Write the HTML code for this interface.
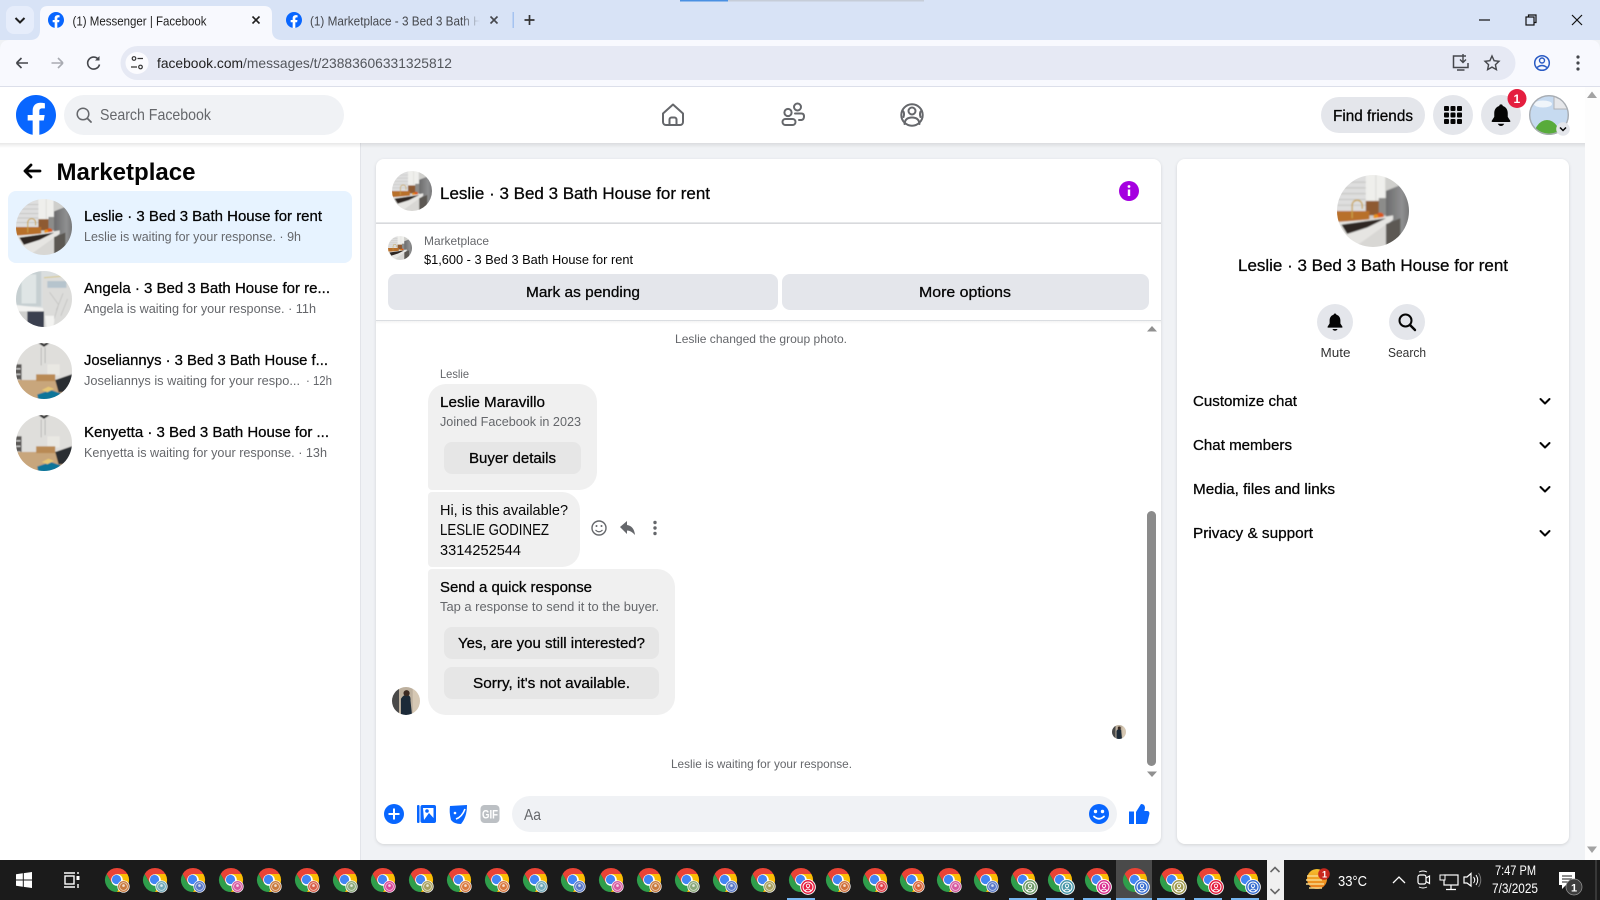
<!DOCTYPE html>
<html lang="en"><head><meta charset="utf-8"><title>Messenger | Facebook</title>
<style>
html,body{margin:0;padding:0;width:1600px;height:900px;overflow:hidden;background:#f0f2f5}
svg{display:block}
text{font-family:"Liberation Sans",sans-serif;fill:#050505;font-size:15px}
.m{stroke:#050505;stroke-width:.28px}
.s{fill:#65676b;font-size:13px}
.x{fill:#65676b;font-size:12px}
.t{font-size:13px;fill:#1f1f1f}
.w{fill:#fff;font-size:13px}
.b{font-weight:700}
</style></head><body>
<svg xmlns="http://www.w3.org/2000/svg" width="1600" height="900" viewBox="0 0 1600 900">
<defs>
<clipPath id="cc"><circle cx="50" cy="50" r="50"/></clipPath>
<clipPath id="tab2"><rect x="305" y="8" width="175" height="26"/></clipPath>
<filter id="soft" x="-5%" y="-5%" width="110%" height="110%"><feGaussianBlur stdDeviation="1"/></filter>
<linearGradient id="fade" x1="0" x2="1"><stop offset="0" stop-color="#d8e3f6" stop-opacity="0"/><stop offset="1" stop-color="#d8e3f6"/></linearGradient>
<linearGradient id="shd" x1="0" x2="0" y1="0" y2="1"><stop offset="0" stop-color="#000" stop-opacity=".09"/><stop offset="1" stop-color="#000" stop-opacity="0"/></linearGradient>
<linearGradient id="sun" x1="0" x2="0" y1="0" y2="1"><stop offset="0" stop-color="#f6c02c"/><stop offset="1" stop-color="#ea7a1c"/></linearGradient>
<linearGradient id="steel" x1="0" x2="1"><stop offset="0" stop-color="#6c6c6d"/><stop offset=".6" stop-color="#8f9091"/><stop offset="1" stop-color="#6a6a6b"/></linearGradient>
<symbol id="fb" viewBox="0 0 36 36"><path fill="#0866ff" d="M15 35.8C6.5 34.3 0 26.9 0 18 0 8.1 8.1 0 18 0s18 8.1 18 18c0 8.9-6.5 16.3-15 17.8l-1-.8h-4l-1 .8z"/><path fill="#fff" d="m25 23 .8-5H21v-3.5c0-1.4.5-2.5 2.7-2.5H26V7.4c-1.3-.2-2.7-.4-4-.4-4.1 0-7 2.5-7 7v4h-4.5v5H15v12.7c1 .2 2 .3 3 .3s2-.1 3-.3V23h4z"/></symbol>
<symbol id="kit" viewBox="0 0 100 100"><g clip-path="url(#cc)"><g filter="url(#soft)">
<rect x="-5" y="-5" width="110" height="110" fill="#cfcfcc"/>
<rect x="-5" y="-5" width="47" height="60" fill="#dedede"/>
<path d="M0 10H42M0 18H42M0 26H42M0 34H42M0 42H42" stroke="#c4c4c2" stroke-width="1.500"/>
<rect x="40" y="-5" width="27" height="42" fill="#efefec"/><path d="M54 0V36" stroke="#cfcfcc"/>
<rect x="40" y="36" width="20" height="20" fill="#8e5a30"/>
<rect x="58" y="32" width="14" height="24" fill="#8c8c8a"/>
<path d="M68 22 88 14 105 20V90H68Z" fill="url(#steel)"/>
<rect x="-5" y="50" width="50" height="15" fill="#b8702c"/>
<path d="M21 60V42a7 7 0 0 1 14 0v5" fill="none" stroke="#c9a24a" stroke-width="1.800"/>
<circle cx="60" cy="57" r="5" fill="#d9591a"/><circle cx="54" cy="58" r="3.500" fill="#e8921e"/>
<path d="M-5 66 42 62 78 56 78 62 30 100H-5Z" fill="#e6e5e2"/>
<path d="M6 69 40 64 68 60 42 73 14 82Z" fill="#2d2723"/>
<path d="M18 105 72 66 76 105Z" fill="#d8d7d4"/>
<path d="M68 68 88 60V105H68Z" fill="#5c5852"/>
</g></g></symbol>
<symbol id="bath" viewBox="0 0 100 100"><g clip-path="url(#cc)"><g filter="url(#soft)">
<rect x="-5" y="-5" width="110" height="110" fill="#dadedf"/>
<rect x="-5" y="-5" width="50" height="68" fill="#c6cfd1"/>
<rect x="10" y="6" width="26" height="52" fill="#dfe5e5"/>
<rect x="48" y="12" width="57" height="93" fill="#dcdcda"/>
<rect x="56" y="18" width="34" height="12" fill="#b6c4cd"/>
<path d="M50 12 100 8" stroke="#d8c98e" stroke-width="2"/>
<path d="M60 38 76 60 68 86 M84 40 72 70 M92 50 80 80" stroke="#bdbdbb" stroke-width="1.200" fill="none"/>
<path d="M-5 60 48 66 50 74-5 72Z" fill="#f3f3f1"/>
<path d="M20 72H50V105H20Z" fill="#3a4050"/>
<path d="M-5 72H20V105H-5Z" fill="#cfcfcd"/>
<path d="M52 80H68Q70 96 63 105H55Z" fill="#f3f3f1"/>
</g></g></symbol>
<symbol id="liv" viewBox="0 0 100 100"><g clip-path="url(#cc)"><g filter="url(#soft)">
<rect x="-5" y="-5" width="110" height="110" fill="#dfdedb"/>
<path d="M32 -5 50 7 68 -5H60L50 2 40 -5Z" fill="#2b2b2b"/>
<path d="M45 8V40M52 8V36" stroke="#888" stroke-width=".8"/>
<rect x="56" y="38" width="22" height="20" fill="#e9e8e3"/>
<rect x="-5" y="38" width="15" height="34" fill="#5a5856"/>
<path d="M0 46h8M0 56h8M0 66h8" stroke="#e0e0e0" stroke-width="2"/>
<rect x="-5" y="66" width="110" height="40" fill="#c8a67c"/>
<rect x="36" y="56" width="34" height="12" fill="#b98a54"/>
<path d="M70 66 105 54V88H76Z" fill="#2c2d30"/>
<path d="M38 92 62 84 80 90 74 105H40Z" fill="#117599"/>
<path d="M46 84 58 78 68 82 56 88Z" fill="#e6c674"/>
</g></g></symbol>
<symbol id="per" viewBox="0 0 100 100"><g clip-path="url(#cc)"><g filter="url(#soft)">
<rect x="-5" y="-5" width="110" height="110" fill="#bdb09e"/>
<rect x="-5" y="-5" width="30" height="110" fill="#4a4a4a"/>
<path d="M32 105V42Q42 26 54 28 68 30 66 48L72 105Z" fill="#1b2a38"/>
<circle cx="52" cy="22" r="11" fill="#3a2a20"/>
<rect x="74" y="-5" width="31" height="110" fill="#d6c8b4"/>
</g></g></symbol>
<g id="c"><path fill="#ea4335" d="M-10.4 -6A12 12 0 0 1 10.4 -6L0 -6-5.2 3Z"/><path fill="#2f9e4b" d="M-10.4 -6A12 12 0 0 0 0 12L5.2 3-5.2 3Z"/><path fill="#fbbc04" d="M10.4 -6A12 12 0 0 1 0 12L5.2 3 0 -6Z"/><circle r="5.8" fill="#fff"/><circle r="4.6" cx="-.5" cy="-.5" fill="#4285f4"/></g>
<g id="i"><use href="#c"/><circle cx="6.5" cy="6.5" r="5.8" fill="currentColor" stroke="#fff" stroke-width=".7"/><circle cx="6.5" cy="6.5" r="3.9" fill="none" stroke="#fff" stroke-opacity=".7" stroke-width=".8"/><circle cx="6.5" cy="5.6" r="1.3" fill="#fff" fill-opacity=".75"/></g>
<g id="I"><use href="#c"/><circle cx="7" cy="7" r="7.4" fill="currentColor" stroke="#fff" stroke-width=".9"/><circle cx="7" cy="7" r="5" fill="none" stroke="#fff" stroke-width="1"/><circle cx="7" cy="5.8" r="1.7" fill="none" stroke="#fff" stroke-width=".9"/><path d="M4.2 10.4Q7 7.6 9.8 10.4" fill="none" stroke="#fff" stroke-width=".9"/></g>
<path id="chev" d="M-4.5 -2 0 2.500 4.500 -2" fill="none" stroke="#050505" stroke-width="2" stroke-linecap="round" stroke-linejoin="round"/>
<path id="bell" d="M0 -8.5a1.4 1.4 0 0 1 1.4 1.3C4 -6.5 5.4 -4.2 5.4 -1.5V1.5L7.4 4.6Q7.8 5.6 6.6 5.6H-6.6Q-7.8 5.6 -7.4 4.6L-5.4 1.5V-1.5C-5.4 -4.2 -4 -6.5 -1.4 -7.2A1.4 1.4 0 0 1 0 -8.5ZM-2.6 7H2.6Q1.6 8.8 0 8.8T-2.6 7Z" fill="#050505"/>
</defs>

<!-- browser chrome -->
<rect width="1600" height="40" fill="#d8e3f6"/>
<rect x="680" width="48" height="1.500" fill="#4a90e2"/><rect x="728" width="196" height="1.500" fill="#c6cdd8"/>
<rect x="6" y="6" width="28" height="28" rx="8" fill="#e6edfb"/>
<path d="M15.500 18 20 22.500 24.500 18" fill="none" stroke="#1f1f1f" stroke-width="2"/>
<path d="M30 40Q40 40 40 30V14Q40 6 48 6H264Q272 6 272 14V30Q272 40 282 40Z" fill="#f8f9fe"/>
<use href="#fb" x="48" y="12" width="16" height="16"/>
<text x="72.500" y="25.500" class="t" textLength="134" lengthAdjust="spacingAndGlyphs">(1) Messenger | Facebook</text>
<path d="M252.500 16.500 259.500 23.500M259.500 16.500 252.500 23.500" stroke="#1f1f1f" stroke-width="1.600"/>
<use href="#fb" x="286" y="12" width="16" height="16"/>
<g clip-path="url(#tab2)"><text x="310" y="25.500" class="t" textLength="197" lengthAdjust="spacingAndGlyphs" style="fill:#45474c">(1) Marketplace - 3 Bed 3 Bath House</text></g>
<rect x="462" y="10" width="18" height="20" fill="url(#fade)"/>
<path d="M490.500 16.500 497.500 23.500M497.500 16.500 490.500 23.500" stroke="#45474c" stroke-width="1.600"/>
<rect x="512.500" y="12" width="1.500" height="16" fill="#a5c3f0"/>
<path d="M529.500 15V25M524.500 20H534.500" stroke="#333" stroke-width="1.700"/>
<path d="M1479 20H1490" stroke="#111" stroke-width="1.200"/>
<rect x="1526" y="17" width="8" height="8" fill="none" stroke="#111" stroke-width="1.200"/><path d="M1528.500 17V15H1536V22.500H1534" fill="none" stroke="#111" stroke-width="1.200"/>
<path d="M1572 15 1582 25M1582 15 1572 25" stroke="#111" stroke-width="1.200"/>

<path d="M0 86V50Q0 40 10 40H1590Q1600 40 1600 50V86Z" fill="#f8f9fe"/>
<path d="M16.500 63H28M16.500 63 21.500 58M16.500 63 21.500 68" fill="none" stroke="#45474c" stroke-width="1.600"/>
<path d="M51.500 63H63M63 63 58 58M63 63 58 68" fill="none" stroke="#a9abb2" stroke-width="1.600"/>
<path d="M98.500 59.500A6 6 0 1 0 99.500 64.500" fill="none" stroke="#45474c" stroke-width="1.600"/><path d="M99.500 56V60.500H95Z" fill="#45474c"/>
<rect x="120.500" y="46" width="1395" height="34" rx="17" fill="#e6e9f4"/>
<ellipse cx="137" cy="63" rx="11.500" ry="11" fill="#fbfbfe"/>
<circle cx="134" cy="58.500" r="1.800" fill="none" stroke="#333" stroke-width="1.200"/><path d="M137.500 58.500H143M131 67H137" stroke="#333" stroke-width="1.300"/><circle cx="140.500" cy="67" r="1.800" fill="none" stroke="#333" stroke-width="1.200"/>
<text x="157" y="68" style="font-size:14px;fill:#1f1f1f" textLength="295" lengthAdjust="spacingAndGlyphs">facebook.com<tspan style="fill:#53565c">/messages/t/23883606331325812</tspan></text>
<path d="M1466 56H1453.500V67.500H1468V63M1457 70H1464.500" fill="none" stroke="#45474c" stroke-width="1.500"/><path d="M1463 54V62M1460 59.500 1463 62.500 1466 59.500" fill="none" stroke="#45474c" stroke-width="1.400"/>
<path d="M1492 56 1494.100 60.700 1499 61.300 1495.400 64.700 1496.400 69.600 1492 67.100 1487.600 69.600 1488.600 64.700 1485 61.300 1489.900 60.700Z" fill="none" stroke="#45474c" stroke-width="1.400"/>
<circle cx="1542" cy="63" r="7.300" fill="none" stroke="#2a5bc4" stroke-width="1.500"/><circle cx="1542" cy="60.500" r="2.500" fill="none" stroke="#2a5bc4" stroke-width="1.400"/><path d="M1537 67.500Q1542 63.500 1547 67.500" fill="none" stroke="#2a5bc4" stroke-width="1.400"/>
<circle cx="1578" cy="57" r="1.600" fill="#45474c"/><circle cx="1578" cy="63" r="1.600" fill="#45474c"/><circle cx="1578" cy="69" r="1.600" fill="#45474c"/>
<rect y="86" width="1600" height="1" fill="#dcdfea"/>

<!-- page background -->
<rect y="87" width="1600" height="773" fill="#f0f2f5"/>
<rect x="1585" y="87" width="15" height="773" fill="#fdfdfd"/>
<rect y="143" width="360" height="717" fill="#fff"/><rect x="360" y="143" width="1" height="717" fill="#e2e4e9"/>
<rect y="143" width="1585" height="5" fill="url(#shd)"/>
<rect y="87" width="1585" height="56" fill="#fff"/>
<path d="M1592 91.500 1597 98H1587Z" fill="#a3a3a3"/>
<path d="M1592 853 1597 846.500H1587Z" fill="#a3a3a3"/>

<!-- fb header -->
<use href="#fb" x="15.500" y="95" width="41" height="40"/>
<rect x="64" y="95" width="280" height="40" rx="20" fill="#f0f2f5"/>
<circle cx="83" cy="114" r="5.800" fill="none" stroke="#65676b" stroke-width="1.500"/><path d="M87.500 118.500 91 122" stroke="#65676b" stroke-width="1.800" stroke-linecap="round"/>
<text x="100" y="120" class="s" style="font-size:16px" textLength="111" lengthAdjust="spacingAndGlyphs">Search Facebook</text>
<g fill="none" stroke="#65676b" stroke-width="2" stroke-linejoin="round" stroke-linecap="round">
<path d="M663 113.500 673 104.500 683 113.500V122A3 3 0 0 1 680 125H666A3 3 0 0 1 663 122Z"/><path d="M669.500 125V119.500A2 2 0 0 1 671.500 117.500H674.500A2 2 0 0 1 676.500 119.500V125"/>
<circle cx="788" cy="112.500" r="3.600"/><rect x="782.500" y="119" width="13" height="6" rx="3"/><circle cx="797.500" cy="107" r="3.500"/><path d="M795 113.500H801.500Q804 113.500 804 116.500T801.500 120H799"/>
<circle cx="912" cy="115" r="10.700"/><circle cx="912" cy="111" r="3.500"/><path d="M904.500 124Q905 117.500 912 117.500T919.500 124"/><path d="M902.500 110.500Q905 113 903.500 117M921.500 110.500Q919 113 920.500 117"/>
</g>
<rect x="1321" y="97" width="104" height="36" rx="18" fill="#e4e6eb"/>
<text x="1333" y="121" class="m" style="font-size:16px" textLength="80" lengthAdjust="spacingAndGlyphs">Find friends</text>
<circle cx="1453" cy="115" r="20" fill="#e4e6eb"/>
<g fill="#050505"><rect x="1444" y="106" width="5" height="5" rx="1"/><rect x="1450.500" y="106" width="5" height="5" rx="1"/><rect x="1457" y="106" width="5" height="5" rx="1"/><rect x="1444" y="112.500" width="5" height="5" rx="1"/><rect x="1450.500" y="112.500" width="5" height="5" rx="1"/><rect x="1457" y="112.500" width="5" height="5" rx="1"/><rect x="1444" y="119" width="5" height="5" rx="1"/><rect x="1450.500" y="119" width="5" height="5" rx="1"/><rect x="1457" y="119" width="5" height="5" rx="1"/></g>
<circle cx="1501" cy="115" r="20" fill="#e4e6eb"/>
<use href="#bell" transform="translate(1501 115) scale(1.250)"/>
<circle cx="1517" cy="98.500" r="9.500" fill="#e41e3f"/><text x="1513.500" y="103" class="b" style="font-size:12px;fill:#fff">1</text>
<clipPath id="pa"><circle cx="1549" cy="115" r="20"/></clipPath>
<g clip-path="url(#pa)"><rect x="1529" y="95" width="40" height="40" fill="#c6daf0"/><ellipse cx="1543" cy="104" rx="9" ry="3.500" fill="#f0f5fa"/><ellipse cx="1547" cy="140" rx="14" ry="20" fill="#58ab3b"/><path d="M1554 95 1569 109V95Z" fill="#f8f8f8"/><path d="M1554 95V109H1569Z" fill="#e6e7ea"/><path d="M1554 95V109H1569" fill="none" stroke="#b0b3b8" stroke-width="1"/><circle cx="1549" cy="115" r="19.500" fill="none" stroke="#a8acb1" stroke-width="1.800"/></g>
<circle cx="1563" cy="129" r="6.800" fill="#e4e6eb"/><path d="M1560 127.500 1563 130.500 1566 127.500" fill="none" stroke="#050505" stroke-width="1.500"/>

<!-- sidebar -->
<path d="M25 171H40M25 171 31 165M25 171 31 177" fill="none" stroke="#050505" stroke-width="2.800" stroke-linecap="round"/>
<text x="56.500" y="180" class="b" style="font-size:24px" textLength="139" lengthAdjust="spacingAndGlyphs">Marketplace</text>
<rect x="8" y="191" width="344" height="72" rx="8" fill="#e7f3ff"/>
<use href="#kit" x="16" y="199" width="56" height="56"/>
<use href="#bath" x="16" y="271" width="56" height="56"/>
<use href="#liv" x="16" y="343" width="56" height="56"/>
<use href="#liv" x="16" y="415" width="56" height="56"/>
<text x="84" y="221" class="m" textLength="238" lengthAdjust="spacingAndGlyphs">Leslie · 3 Bed 3 Bath House for rent</text>
<text x="84" y="241" class="s" textLength="217" lengthAdjust="spacingAndGlyphs">Leslie is waiting for your response. · 9h</text>
<text x="84" y="293" class="m" textLength="246" lengthAdjust="spacingAndGlyphs">Angela · 3 Bed 3 Bath House for re...</text>
<text x="84" y="313" class="s" textLength="232" lengthAdjust="spacingAndGlyphs">Angela is waiting for your response. · 11h</text>
<text x="84" y="365" class="m" textLength="244" lengthAdjust="spacingAndGlyphs">Joseliannys · 3 Bed 3 Bath House f...</text>
<text x="84" y="385" class="s" textLength="216" lengthAdjust="spacingAndGlyphs">Joseliannys is waiting for your respo...</text>
<text x="306" y="385" class="s" textLength="26" lengthAdjust="spacingAndGlyphs">· 12h</text>
<text x="84" y="437" class="m" textLength="245" lengthAdjust="spacingAndGlyphs">Kenyetta · 3 Bed 3 Bath House for ...</text>
<text x="84" y="457" class="s" textLength="243" lengthAdjust="spacingAndGlyphs">Kenyetta is waiting for your response. · 13h</text>

<!-- center card -->
<g style="filter:drop-shadow(0 1px 1.500px rgba(0,0,0,.12))"><rect x="376" y="159" width="785" height="685" rx="8" fill="#fff"/><rect x="1177" y="159" width="392" height="685" rx="8" fill="#fff"/></g>
<use href="#kit" x="392" y="171" width="40" height="40"/>
<text x="440" y="199" class="m" style="font-size:17px" textLength="270" lengthAdjust="spacingAndGlyphs">Leslie · 3 Bed 3 Bath House for rent</text>
<circle cx="1129" cy="191" r="10" fill="#a500e0"/><rect x="1127.800" y="189.500" width="2.400" height="6.500" fill="#fff"/><circle cx="1129" cy="186.500" r="1.400" fill="#fff"/>
<rect x="376" y="222.500" width="785" height="1.300" fill="#ced0d4"/>
<use href="#kit" x="388" y="236" width="24" height="24"/>
<text x="424" y="245" class="x" textLength="65" lengthAdjust="spacingAndGlyphs">Marketplace</text>
<text x="424" y="264" style="font-size:13px" textLength="209" lengthAdjust="spacingAndGlyphs">$1,600 - 3 Bed 3 Bath House for rent</text>
<rect x="388" y="274" width="390" height="36" rx="8" fill="#e4e6eb"/>
<rect x="782" y="274" width="367" height="36" rx="8" fill="#e4e6eb"/>
<text x="526" y="297" class="m" textLength="114" lengthAdjust="spacingAndGlyphs">Mark as pending</text>
<text x="919" y="297" class="m" textLength="92" lengthAdjust="spacingAndGlyphs">More options</text>
<rect x="376" y="320" width="785" height="1" fill="#dadde1"/><rect x="376" y="321" width="785" height="3" fill="url(#shd)" opacity=".5"/>
<text x="675" y="343" class="x" textLength="172" lengthAdjust="spacingAndGlyphs">Leslie changed the group photo.</text>
<text x="440" y="378" class="x" textLength="29" lengthAdjust="spacingAndGlyphs">Leslie</text>

<path d="M446 384H579A18 18 0 0 1 597 402V472A18 18 0 0 1 579 490H432A4 4 0 0 1 428 486V402A18 18 0 0 1 446 384Z" fill="#f0f0f0"/>
<text x="440" y="407" class="m" textLength="105" lengthAdjust="spacingAndGlyphs">Leslie Maravillo</text>
<text x="440" y="426" class="s" textLength="141" lengthAdjust="spacingAndGlyphs">Joined Facebook in 2023</text>
<rect x="444" y="442" width="137" height="32" rx="8" fill="#e6e6e6"/>
<text x="469" y="463" class="m" textLength="87" lengthAdjust="spacingAndGlyphs">Buyer details</text>

<path d="M432 492H562A18 18 0 0 1 580 510V549A18 18 0 0 1 562 567H432A4 4 0 0 1 428 563V496A4 4 0 0 1 432 492Z" fill="#f0f0f0"/>
<text x="440" y="515" textLength="128" lengthAdjust="spacingAndGlyphs">Hi, is this available?</text>
<text x="440" y="535" style="font-size:16px" textLength="109" lengthAdjust="spacingAndGlyphs">LESLIE GODINEZ</text>
<text x="440" y="555" textLength="81" lengthAdjust="spacingAndGlyphs">3314252544</text>
<circle cx="599" cy="528" r="7" fill="none" stroke="#65676b" stroke-width="1.400"/><circle cx="596.500" cy="526" r="1" fill="#65676b"/><circle cx="601.500" cy="526" r="1" fill="#65676b"/><path d="M595.500 530Q599 533.500 602.500 530" fill="none" stroke="#65676b" stroke-width="1.200"/>
<path d="M620 527 627 521V525Q634 526 635 535 631 530.500 627 530.500V534Z" fill="#65676b"/>
<circle cx="655" cy="522.500" r="1.700" fill="#65676b"/><circle cx="655" cy="528" r="1.700" fill="#65676b"/><circle cx="655" cy="533.500" r="1.700" fill="#65676b"/>

<path d="M432 569H657A18 18 0 0 1 675 587V697A18 18 0 0 1 657 715H446A18 18 0 0 1 428 697V573A4 4 0 0 1 432 569Z" fill="#f0f0f0"/>
<text x="440" y="592" class="m" textLength="152" lengthAdjust="spacingAndGlyphs">Send a quick response</text>
<text x="440" y="611" class="s" textLength="219" lengthAdjust="spacingAndGlyphs">Tap a response to send it to the buyer.</text>
<rect x="444" y="627" width="215" height="32" rx="8" fill="#e6e6e6"/>
<text x="458" y="648" class="m" textLength="187" lengthAdjust="spacingAndGlyphs">Yes, are you still interested?</text>
<rect x="444" y="667" width="215" height="32" rx="8" fill="#e6e6e6"/>
<text x="473" y="688" class="m" textLength="157" lengthAdjust="spacingAndGlyphs">Sorry, it's not available.</text>
<use href="#per" x="392" y="687" width="28" height="28"/>
<use href="#per" x="1112" y="725" width="14" height="14"/>
<text x="671" y="768" class="x" textLength="181" lengthAdjust="spacingAndGlyphs">Leslie is waiting for your response.</text>

<path d="M1152 326 1157 331.500H1147Z" fill="#909090"/>
<rect x="1147" y="511" width="9" height="255" rx="4.500" fill="#8b8b8b"/>
<path d="M1152 777 1157 771.500H1147Z" fill="#909090"/>

<!-- composer -->
<circle cx="394" cy="814" r="10" fill="#0866ff"/><path d="M394 808.500V819.500M388.500 814H399.500" stroke="#fff" stroke-width="2"/>
<rect x="420.500" y="805" width="15.500" height="18" rx="2" fill="#0866ff"/><rect x="417" y="805" width="2.500" height="18" rx="1" fill="#0866ff"/><path d="M423 808H433.500V818L429 813 424 820Z" fill="#fff"/><circle cx="427" cy="811" r="1.800" fill="#0866ff"/>
<path d="M450 806 467 805Q467 817 461 824 454 824 451 820 449 812 450 806Z" fill="#0866ff"/><circle cx="455" cy="813" r="1.300" fill="#fff"/><path d="M456 819Q462 817 465 809" fill="none" stroke="#fff" stroke-width="1.600"/>
<rect x="480.500" y="805" width="19" height="18" rx="4" fill="#bcc0c4"/><text x="482" y="818.500" class="b" style="font-size:11.500px;fill:#fff" textLength="16" lengthAdjust="spacingAndGlyphs">GIF</text>
<rect x="512" y="796" width="605" height="36" rx="18" fill="#f0f2f5"/>
<text x="524" y="820" class="s" style="font-size:16px" textLength="17" lengthAdjust="spacingAndGlyphs">Aa</text>
<circle cx="1099" cy="814" r="10" fill="#0866ff"/><circle cx="1095.500" cy="811.500" r="1.700" fill="#fff"/><circle cx="1102.500" cy="811.500" r="1.700" fill="#fff"/><path d="M1094 816.500Q1099 821 1104 816.500" fill="none" stroke="#fff" stroke-width="1.800" stroke-linecap="round"/>
<rect x="1129" y="811.500" width="5" height="12.500" fill="#0866ff"/><path d="M1136 812 1141 804Q1145 804 1145 808L1144.300 811H1147Q1150 811 1149.300 814.500L1147.500 822Q1147 824 1145 824H1136Z" fill="#0866ff"/>

<!-- right card -->
<use href="#kit" x="1337" y="175" width="72" height="72"/>
<text x="1238" y="271" class="m" style="font-size:17px" textLength="270" lengthAdjust="spacingAndGlyphs">Leslie · 3 Bed 3 Bath House for rent</text>
<circle cx="1335" cy="322" r="18" fill="#e4e6eb"/><use href="#bell" transform="translate(1335 322)"/>
<circle cx="1407" cy="322" r="18" fill="#e4e6eb"/><circle cx="1405.500" cy="320.500" r="6" fill="none" stroke="#050505" stroke-width="2"/><path d="M1410 325 1415 330" stroke="#050505" stroke-width="2.400" stroke-linecap="round"/>
<text x="1320.500" y="357" style="font-size:13px;fill:#333" textLength="30" lengthAdjust="spacingAndGlyphs">Mute</text>
<text x="1388" y="357" style="font-size:13px;fill:#333" textLength="38" lengthAdjust="spacingAndGlyphs">Search</text>
<text x="1193" y="406" class="m" textLength="104" lengthAdjust="spacingAndGlyphs">Customize chat</text>
<text x="1193" y="450" class="m" textLength="99" lengthAdjust="spacingAndGlyphs">Chat members</text>
<text x="1193" y="494" class="m" textLength="142" lengthAdjust="spacingAndGlyphs">Media, files and links</text>
<text x="1193" y="538" class="m" textLength="120" lengthAdjust="spacingAndGlyphs">Privacy &amp; support</text>
<use href="#chev" x="1545" y="401"/><use href="#chev" x="1545" y="445"/><use href="#chev" x="1545" y="489"/><use href="#chev" x="1545" y="533"/>

<!-- taskbar -->
<rect y="860" width="1600" height="40" fill="#1b1b1b"/>
<path d="M16 874.300 22.800 873.300V879.500H16ZM23.800 873.100 32 872V879.500H23.800ZM16 880.500H22.800V886.700L16 885.700ZM23.800 880.500H32V888L23.800 886.900Z" fill="#fff"/>
<g fill="none" stroke="#fff" stroke-width="1.400"><path d="M64 873H75M64 887H75"/><rect x="65" y="876" width="9" height="8"/></g><path d="M78 872V874M78 884V888" stroke="#fff" stroke-width="1.400"/><rect x="76.500" y="876" width="3" height="4" fill="#fff"/>
<rect x="1116" y="860" width="36" height="40" fill="#4a4a4a"/>
<g fill="#76b6f0"><rect x="787" y="898" width="28" height="2"/><rect x="1009" y="898" width="28" height="2"/><rect x="1046" y="898" width="28" height="2"/><rect x="1083" y="898" width="28" height="2"/><rect x="1116" y="898" width="36" height="2"/><rect x="1157" y="898" width="28" height="2"/><rect x="1194" y="898" width="28" height="2"/><rect x="1231" y="898" width="28" height="2"/></g>
<g>
<use href="#i" x="117" y="880" color="#c87a3e"/><use href="#i" x="155" y="880" color="#6fa8b8"/><use href="#i" x="193" y="880" color="#5a7ac8"/><use href="#i" x="231" y="880" color="#d65a9f"/><use href="#i" x="269" y="880" color="#c87a3e"/><use href="#i" x="307" y="880" color="#d9604a"/><use href="#i" x="345" y="880" color="#8aa87a"/><use href="#i" x="383" y="880" color="#d94a9a"/><use href="#i" x="421" y="880" color="#a8a060"/><use href="#i" x="459" y="880" color="#d9783e"/><use href="#i" x="497" y="880" color="#d9783e"/><use href="#i" x="535" y="880" color="#6fa8b8"/><use href="#i" x="573" y="880" color="#5a7ac8"/><use href="#i" x="611" y="880" color="#d65a9f"/><use href="#i" x="649" y="880" color="#c87a3e"/><use href="#i" x="687" y="880" color="#8aa87a"/><use href="#i" x="725" y="880" color="#5a7ac8"/><use href="#i" x="763" y="880" color="#a8a060"/>
<use href="#I" x="801" y="880" color="#e41e3f"/><use href="#i" x="838" y="880" color="#d0703a"/><use href="#i" x="875" y="880" color="#e0404a"/><use href="#i" x="912" y="880" color="#d9663a"/><use href="#i" x="949" y="880" color="#d65a9f"/><use href="#i" x="986" y="880" color="#5a7ac8"/>
<use href="#I" x="1023" y="880" color="#6f9a6a"/><use href="#I" x="1060" y="880" color="#4a97a8"/><use href="#I" x="1097" y="880" color="#d9308f"/><use href="#I" x="1135" y="880" color="#3a6fd0"/><use href="#I" x="1172" y="880" color="#a09a50"/><use href="#I" x="1209" y="880" color="#e41e3f"/><use href="#I" x="1246" y="880" color="#3a6fd0"/>
</g>
<rect x="1267" y="860" width="17" height="40" fill="#f0f0f0"/>
<path d="M1270.500 872 1275 867.500 1279.500 872M1270.500 889 1275 893.500 1279.500 889" fill="none" stroke="#666" stroke-width="1.600"/>
<!-- tray -->
<circle cx="1317" cy="879" r="10" fill="url(#sun)"/>
<path d="M1306 880H1322M1306 884H1324M1309 888H1322M1307 876H1318" stroke="#f7d98a" stroke-width="1.400"/>
<circle cx="1324" cy="874" r="5.800" fill="#c8281e"/><text x="1322" y="877.500" style="font-size:9px;fill:#fff" class="b">1</text>
<text x="1338" y="886" class="w" style="font-size:15px" textLength="29" lengthAdjust="spacingAndGlyphs">33°C</text>
<path d="M1393 883 1399 877 1405 883" fill="none" stroke="#fff" stroke-width="1.300"/>
<rect x="1418" y="875" width="8" height="9" rx="2" fill="none" stroke="#fff" stroke-width="1.200"/><path d="M1426 878 1429.500 876V883.500L1426 881.500" fill="none" stroke="#fff" stroke-width="1.200"/><path d="M1419 872Q1423 870 1427 872M1419 887Q1423 889 1427 887" fill="none" stroke="#fff" stroke-width=".9"/>
<rect x="1444" y="875" width="14" height="10" fill="none" stroke="#fff" stroke-width="1.200"/><path d="M1451 885V889M1446 889.500H1456" stroke="#fff" stroke-width="1.200"/><rect x="1440" y="875" width="5" height="5" fill="#1b1b1b" stroke="#fff" stroke-width="1"/>
<path d="M1464 877H1467L1471 873.500V886L1467 883H1464Z" fill="none" stroke="#fff" stroke-width="1.200"/><path d="M1473.500 877Q1476 880 1473.500 883M1476 875Q1479.500 880 1476 885" fill="none" stroke="#fff" stroke-width="1"/><path d="M1478.500 873Q1483 880 1478.500 887" fill="none" stroke="#777" stroke-width="1"/>
<text x="1495" y="875" class="w" style="font-size:14px" textLength="41" lengthAdjust="spacingAndGlyphs">7:47 PM</text>
<text x="1492" y="893" class="w" style="font-size:14px" textLength="46" lengthAdjust="spacingAndGlyphs">7/3/2025</text>
<path d="M1559 872H1575V885H1566L1562 889V885H1559Z" fill="#fff"/><path d="M1562 876H1572M1562 879H1572M1562 882H1569" stroke="#1b1b1b" stroke-width="1"/>
<circle cx="1574" cy="887" r="8" fill="#3d3d3d" stroke="#999" stroke-width=".7"/><text x="1571" y="891.500" class="w b" style="font-size:11px">1</text>
<rect x="1595.500" y="860" width="1" height="40" fill="#555"/>
</svg>
</body></html>
